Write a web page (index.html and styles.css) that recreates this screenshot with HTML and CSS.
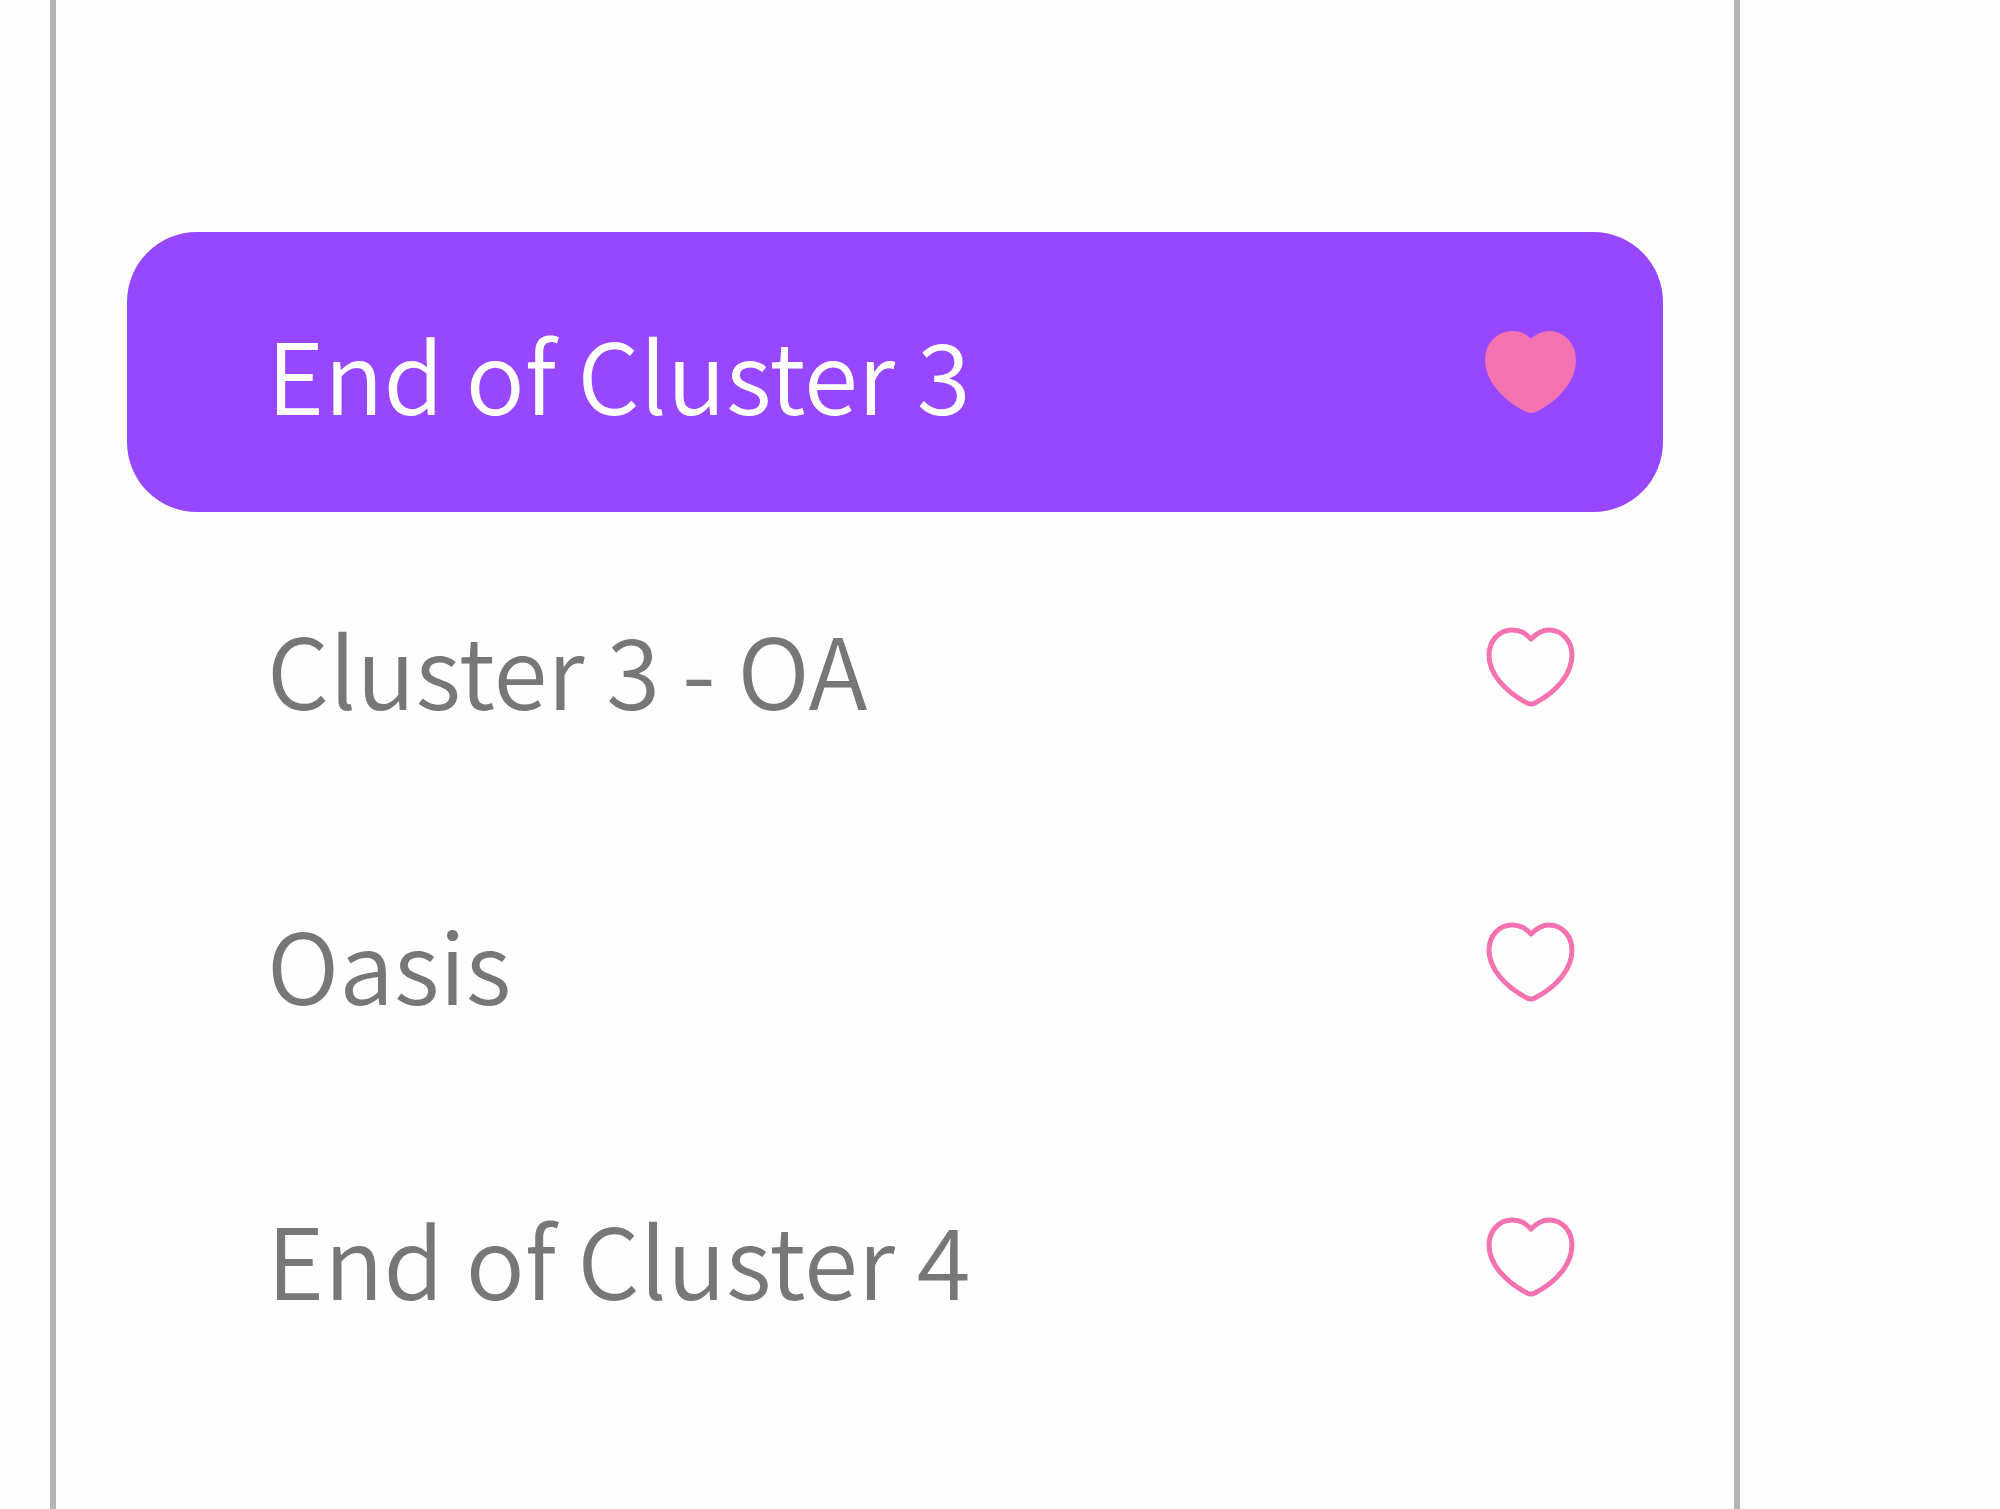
FILE: index.html
```html
<!DOCTYPE html>
<html lang="en">
<head>
<meta charset="utf-8">
<title>Clusters</title>
<link rel="stylesheet" href="styles.css">
</head>
<body>
<svg class="sprite" aria-hidden="true">
  <symbol id="heart" viewBox="0 0 96 88">
    <path d="M48 16C54 10 59 7 66 7C79 7 89 18 89 32C89 50 75 68 52 80Q48 82 44 80C21 68 6 50 6 32C6 18 16 7 29 7C38 7 42 10 48 16Z"/>
  </symbol>
</svg>
<main class="panel">
  <ul class="list">
    <li class="row row-active">
      <a class="name" href="#end-3">End of Cluster 3</a>
      <button class="like liked" type="button" aria-label="Unlike End of Cluster 3"><svg class="heart"><use href="#heart"/></svg></button>
    </li>
    <li class="row">
      <a class="name" href="#oa-3">Cluster 3 - OA</a>
      <button class="like" type="button" aria-label="Like Cluster 3 - OA"><svg class="heart"><use href="#heart"/></svg></button>
    </li>
    <li class="row">
      <a class="name" href="#oasis">Oasis</a>
      <button class="like" type="button" aria-label="Like Oasis"><svg class="heart"><use href="#heart"/></svg></button>
    </li>
    <li class="row">
      <a class="name" href="#end-4">End of Cluster 4</a>
      <button class="like" type="button" aria-label="Like End of Cluster 4"><svg class="heart"><use href="#heart"/></svg></button>
    </li>
  </ul>
</main>
</body>
</html>
```
FILE: styles.css
```css
* {
  box-sizing: border-box;
}

body {
  margin: 0;
  background: #fefefe;
  color: #777;
  font-family: "Noto Sans CJK KR", "Noto Sans CJK JP", sans-serif;
  font-weight: 350;
}

.sprite {
  display: none;
}

.panel {
  min-height: 100vh;
  margin: 0 13% 0 50px;
  padding: 232px 71px 0;
  border: solid #b5b5b5;
  border-width: 0 6px;
}

.list {
  display: flex;
  flex-direction: column;
  gap: 15px;
  margin: 0;
  padding: 0;
  list-style: none;
}

.row {
  display: flex;
  align-items: center;
  justify-content: space-between;
  padding: 66px 84px 66px 140px;
  border-radius: 70px;
}

.row-active {
  background: #9747ff;
  color: #fff;
}

.name {
  color: inherit;
  font-size: 98px;
  line-height: 148px;
  text-decoration: none;
}

.like {
  display: block;
  padding: 0;
  border: 0;
  background: none;
  cursor: pointer;
}

.heart {
  display: block;
  width: 96px;
  height: 88px;
  fill: none;
  stroke: #f472b0;
  stroke-width: 5;
  stroke-linejoin: round;
}

.liked .heart {
  fill: #f472b0;
  stroke-width: 8;
}
```
